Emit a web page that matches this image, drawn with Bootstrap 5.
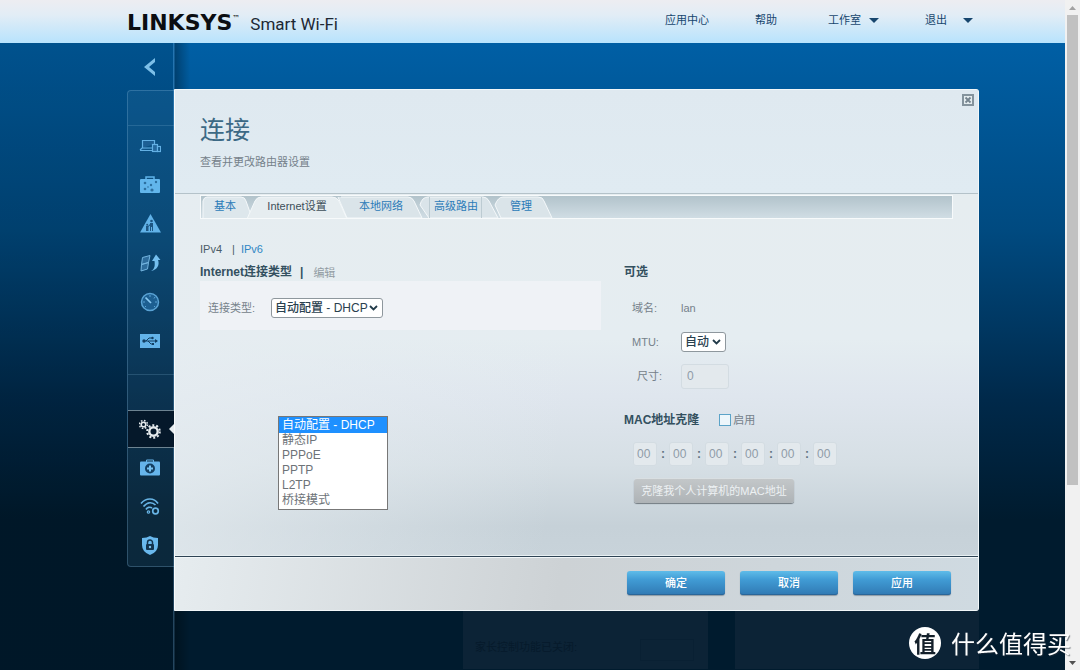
<!DOCTYPE html>
<html lang="zh-CN">
<head>
<meta charset="utf-8">
<meta name="viewport" content="width=device-width, initial-scale=1">
<title>Linksys Smart Wi-Fi</title>
<link href="https://cdn.jsdelivr.net/npm/bootstrap@5.3.0/dist/css/bootstrap.min.css" rel="stylesheet">
<style>
  body {
    font-family: "Liberation Sans", "Noto Sans CJK SC", sans-serif;
    font-size: 11px;
    line-height: 16px;
    color: #75818a;
    background: #001b2e;
  }
  a { text-decoration: none; }
  .page { background: linear-gradient(#005fa5 0, #005fa5 43px, #004a80 230px, #00294a 400px, #001b2e 520px); }

  /* top bar */
  .topbar { height: 43px; padding: 0 92px 0 127px; background: linear-gradient(#ededf1, #e2edf6 35%, #b8e3fd); }
  .brand-word { font: bold 22px/46px "DejaVu Sans", sans-serif; color: #0b0e12; }
  .brand-word sup { font-size: 8px; font-weight: normal; top: -9px; }
  .brand-sub { margin-left: 10px; font: 17px/48px Roboto, sans-serif; color: #1d2833; }
  .topnav { padding-top: 12px; gap: 46px; }
  .topnav a { color: #17466e; }
  .topnav .gap-more { margin-left: 5px; }
  .caret { width: 10px; height: 5px; margin-top: 6px; background: #17466e; clip-path: polygon(0 0, 100% 0, 50% 100%); }

  /* side rail */
  .stage { padding: 0 86px 0 127px; background: linear-gradient(90deg, rgba(0,0,0,.14) 173px, rgba(120,170,210,.3) 173px, rgba(120,170,210,.3) 174px, rgba(0,0,0,.3) 175px, transparent 190px); }
  .rail { width: 47px; }
  .back-btn { height: 47px; width: 46px; }
  .rail-box { border: 1px solid rgba(130,180,215,.3); border-right: 0; border-radius: 4px 0 0 4px; background: rgba(70,130,165,.16); height: 477px; }
  .rail-gap { height: 34px; }
  .rail-line { border-top: 1px solid rgba(130,180,215,.22); }
  .rail-tail { height: 36px; margin-top: 14px; }
  .rail-link { height: 39px; padding-right: 2px; }
  .rail-active { height: 38px; padding-right: 2px; background: #05182a; border-top: 1px solid #6d8391; border-bottom: 1px solid #6d8391; position: relative; }
  .rail-active::after { content: ""; position: absolute; right: 0; width: 5px; height: 10px; background: #e7edf0; clip-path: polygon(100% 0, 100% 100%, 0 50%); }

  /* dialog */
  .dialog-wrap { padding-top: 46px; }
  .dialog-box { border: 1px solid #f2f7f9; border-left-color: #f8fafb; border-radius: 0 3px 3px 0; background: #dfeaf1; }
  .dialog-head { height: 104px; padding: 24px 25px 0; background: linear-gradient(#dfe9f0, #e0ebf2); border-bottom: 1px solid #b4c2c9; }
  .dialog-head h1 { font-size: 25px; line-height: 32px; font-weight: 400; color: #3c6985; }
  .close-btn { top: 4px; right: 4px; width: 12px; height: 12px; }
  .dialog-body { height: 362px; padding: 1px 25px 0; position: relative;
    background: linear-gradient(100deg, rgba(230,237,241,.8), rgba(230,237,241,0) 50%), linear-gradient(#e6edf0, #e5edf1 40%, #dfe6ee 56%, #d6dfe5 75%, #c6d1d8 92%, #c8d3da); border-bottom: 1px solid #e8f0f3; }
  .dialog-foot { gap: 15px; padding: 14px 27px 15px; border-top: 1px solid #2e4354; box-shadow: inset 0 1px #f1f6f8;
    background: linear-gradient(100deg, #e6ecef, #cdd2d5 48%, #cfdae1); }

  /* tabs */
  .tabbar { height: 24px; border: 1px solid #f7fafb; background: linear-gradient(#b2c3cb, #d0dde4); position: relative; }
  .tab-shapes { left: 1px; top: 0; }
  .tab-links { position: relative; line-height: 20px; padding-left: 1px; }
  .tab-links a { color: #2a7bb8; text-align: center; }
  .tab-links .current { color: #3d4d58; }
  .t1 { width: 46px; } .t2 { width: 98px; } .t3 { width: 70px; } .t4 { width: 80px; } .t5 { width: 50px; }

  .ip-row { margin-top: 21px; line-height: 18px; }
  .ip-row span { color: #4a5c68; }
  .ip-row .bar { margin: 0 6px 0 10px; }
  .ip-row a { color: #2f86c4; }
  .cols { gap: 23px; margin-top: 7px; }
  .col-main { flex: 401 1 0; }
  .col-side { flex: 329 1 0; }
  .cap-title { font-size: 12px; font-weight: bold; line-height: 15px; color: #33505f; }
  .edit-link { color: #929ca3; padding-left: 2px; }
  .type-box { height: 49px; padding: 8px 8px 0; background: #eff2f6; }
  .type-box, .frow { line-height: 20px; }
  .lbl-type { width: 63px; }
  .type-box { padding-top: 4px; }
  .pick {
    appearance: none; height: 20px; padding: 0 12px 0 3px; border: 1px solid #8e979d; border-radius: 3px;
    font: 500 12px/18px "Liberation Sans", "Noto Sans CJK SC", sans-serif; color: #29404e;
    background: #fff url("data:image/svg+xml,%3Csvg xmlns='http://www.w3.org/2000/svg' width='9' height='6'%3E%3Cpath d='M1 1l3.500 3.500L8 1' fill='none' stroke='%23223b49' stroke-width='1.800'/%3E%3C/svg%3E") no-repeat right 4px center;
  }
  .pick-type { width: 112px; }
  .pick-mtu { width: 45px; }
  .frow { height: 34px; }
  .frow label, .frow .lbl { width: 57px; padding-left: 8px; }
  .frow .lbl-sub { padding-left: 13px; }
  .rows { padding-top: 11px; }
  .dim { border: 1px solid #d3dce2; border-radius: 3px; background: #e3e9ed; color: #8f9ca8; font-size: 12px; height: 25px; padding: 0 5px; }
  .dim-size { width: 48px; }
  .dim-mac { width: 24px; height: 24px; padding: 0 3px; }
  .mac-sep { width: 12px; text-align: center; font-size: 12px; font-weight: bold; color: #60727f; }
  .mac-head { margin-top: 19px; }
  .mac-head .tick { appearance: none; width: 12px; height: 12px; border: 1px solid #5ba3c8; background: #edf6fb; margin: 0 2px 0 20px; }
  .mac-row { margin: 14px 0 13px 9px; }
  .clone-btn { height: 24px; width: 160px; margin-left: 10px; border: 0; border-radius: 3px; font-size: 11px; color: #edf1f3;
    background: linear-gradient(#c3c7c9, #aeb3b6); box-shadow: 0 1px 1px #727b80, 0 -1px #d9dfe2; }
  .act-btn { width: 98px; height: 24px; border: 0; border-radius: 3px; padding: 0; color: #fff; font-size: 11px; font-weight: 500; line-height: 22px;
    background: linear-gradient(#5fbce9, #419cd5 35%, #3079b3); box-shadow: inset 0 -1px #2a6699, 0 1px 1px #8d9ba5; }
  .act-btn:hover { color: #fff; }

  /* open list */
  .open-list { left: 103px; top: 222px; width: 110px; border: 1px solid #777; background: #fff; font-size: 12px; line-height: 15px; color: #6d7378; padding-bottom: 1px; }
  .open-list li { padding: 0 3px; }
  .open-list .on { background: #1e90ff; color: #fff; line-height: 16px; }

  /* widgets behind the dialog */
  .behind { padding-left: 289px; gap: 27px; height: 58px; }
  .behind > div { flex: 1 1 0; background: #0c2336; color: #061a2b; padding: 28px 14px 0 12px; }
  .toggle-ghost { width: 54px; height: 22px; border: 1px solid #092033; }

  /* scroll strip and stamp */
  .strip { width: 15px; background: #f1f1f1; }
  .strip .up, .strip .down { height: 15px; }
  .strip .thumb { flex: 470; margin: 0 2px; background: #c1c1c1; }
  .strip .rest { flex: 170; }
  .stamp { position: fixed; right: 9px; bottom: 11px; font: 24px/32px "Noto Sans CJK SC", sans-serif; color: #fff; gap: 10px; text-shadow: 1px 1px 1px rgba(40,50,60,.6); }
  .stamp b { width: 32px; height: 32px; border-radius: 50%; background: #fff; color: #14202b; text-align: center; text-shadow: none; font-size: 22px; line-height: 31px; }
</style>
</head>
<body>
<div class="d-flex min-vh-100">
  <div class="page flex-grow-1 d-flex flex-column">
    <header class="topbar d-flex justify-content-between">
      <div class="d-flex text-nowrap">
        <span class="brand-word">LINKSYS<sup>™</sup></span>
        <span class="brand-sub">Smart Wi-Fi</span>
      </div>
      <nav class="topnav d-flex">
        <a href="#">应用中心</a>
        <a href="#">帮助</a>
        <a href="#" class="gap-more d-flex">工作室<span class="caret ms-2"></span></a>
        <a href="#" class="d-flex">退出<span class="caret ms-3"></span></a>
      </nav>
    </header>

    <div class="stage flex-grow-1 d-flex">
      <aside class="rail flex-shrink-0">
        <button class="back-btn btn p-0 rounded-0 d-flex align-items-center justify-content-center border-0" aria-label="返回">
          <svg width="12" height="20" viewBox="0 0 12 20"><path d="M11 1v4L5 10l6 5v4L0 10z" fill="#7cbfe8"/></svg>
        </button>
        <nav class="rail-box">
          <div class="rail-gap"></div>
          <div class="rail-line"></div>
          <a href="#" class="rail-link d-flex align-items-center justify-content-center" aria-label="设备列表">
            <svg width="22" height="16" viewBox="0 0 22 16" fill="none" stroke="#63b0e4" stroke-width="1.200"><path d="M3.500 10V2.500h12V6M1 12.500h12M1 12l2-2h10" fill="#1d5f94"/><rect x="13.500" y="6.500" width="5" height="7" fill="#24689d"/><rect x="18.500" y="8.500" width="3" height="5"/></svg></a>
          <a href="#" class="rail-link d-flex align-items-center justify-content-center" aria-label="访客网络">
            <svg width="20" height="18" viewBox="0 0 20 18"><path d="M6 3V1h8v2" fill="none" stroke="#5fb4ea" stroke-width="1.500"/><rect y="3" width="20" height="14" rx="1" fill="#62b6ec"/><g fill="#2d70a0"><circle cx="5" cy="7" r="1.300"/><circle cx="11" cy="9" r="1.200"/><circle cx="16" cy="6" r="1.200"/><circle cx="5" cy="13" r="1.300"/><circle cx="12" cy="14" r="1.600"/><circle cx="8" cy="11" r=".8"/></g></svg></a>
          <a href="#" class="rail-link d-flex align-items-center justify-content-center" aria-label="家长控制">
            <svg width="21" height="19" viewBox="0 0 21 19"><path d="M10.500 0L21 18.500H0z" fill="#61b2e8"/><g fill="#1d5683"><circle cx="11.500" cy="7" r="1.300"/><path d="M10 9h3v8h-1v-4h-1v4h-1zM6 12h2.500v5H6z"/><circle cx="7.200" cy="10.800" r="1"/><path d="M8 12l2-2v1.500L8 13z"/></g></svg></a>
          <a href="#" class="rail-link d-flex align-items-center justify-content-center" aria-label="媒体优先级">
            <svg width="21" height="18" viewBox="0 0 21 18"><path d="M2.500 3.500l7.500-2-1.500 7-7 2zM1.500 10.500l7-2-1 6.500-6.500 2z" fill="#2d6c9c" stroke="#73b4df"/><path d="M11 17c4-2 4-6 3.500-10H12l4-6.500L20.500 6H18c2 5-1 10-7 11z" fill="#74bfef"/></svg></a>
          <a href="#" class="rail-link d-flex align-items-center justify-content-center" aria-label="速度测试">
            <svg width="20" height="20" viewBox="0 0 20 20" fill="none"><circle cx="10" cy="10" r="8.500" stroke="#5aa3d5" stroke-width="1.500" fill="#1d5f91"/><path d="M10 3v2M15 5l-1 1.500M17 10h-2M3 10h2M5 15l1-1M15 15l-1-1" stroke="#5aa3d5"/><path d="M5.500 5.500L11 11" stroke="#8ac9f2" stroke-width="1.700"/></svg></a>
          <a href="#" class="rail-link d-flex align-items-center justify-content-center" aria-label="USB 存储">
            <svg width="20" height="14" viewBox="0 0 20 14"><path d="M0 0h20v14H0z" fill="#63b3e9"/><path d="M3 7h14M6 7l3-3h3M8 7l3 3h2" stroke="#123f63" fill="none"/><path d="M15 5l3 2-3 2z" fill="#123f63"/><circle cx="4" cy="7" r="1.700" fill="#123f63"/><circle cx="12.500" cy="4" r="1.200" fill="#123f63"/><path d="M12 9h2v2h-2z" fill="#123f63"/></svg></a>
          <div class="rail-line rail-tail"></div>
          <a href="#" class="rail-active d-flex align-items-center justify-content-center" aria-label="连接">
            <svg width="22" height="20" viewBox="0 0 22 20" fill="none" stroke="#e5eaed"><circle cx="4.500" cy="5.500" r="2.300" stroke-width="1.600"/><circle cx="4.500" cy="5.500" r="4" stroke-width="1.500" stroke-dasharray="1.600 1.540"/><circle cx="14.500" cy="12.500" r="4.200" stroke-width="2.400"/><circle cx="14.500" cy="12.500" r="6.300" stroke-width="2" stroke-dasharray="2 1.960"/></svg></a>
          <a href="#" class="rail-link d-flex align-items-center justify-content-center" aria-label="故障排除">
            <svg width="20" height="17" viewBox="0 0 20 17"><path d="M6.500 3V1h7v2" fill="none" stroke="#68b5e8"/><rect y="2.500" width="20" height="14" rx="1" fill="#66b4ea"/><circle cx="10" cy="9.500" r="5" fill="#143f62"/><path d="M10 6.500v6M7 9.500h6" stroke="#78c3f2" stroke-width="2"/></svg></a>
          <a href="#" class="rail-link d-flex align-items-center justify-content-center" aria-label="无线">
            <svg width="20" height="17" viewBox="0 0 20 17" fill="none" stroke="#68b4e5" stroke-width="1.700"><path d="M1 5.500c5-6 13-6 17 0M3.500 8.500c4-5 9-4.500 12-1.500M6 11.500c1-2 4-3 6-1.500"/><circle cx="15.500" cy="13" r="2.800"/><circle cx="8.500" cy="14" r="1.200" stroke-width="1.200"/></svg></a>
          <a href="#" class="rail-link d-flex align-items-center justify-content-center" aria-label="安全">
            <svg width="16" height="19" viewBox="0 0 16 19"><path d="M0 2q5 0 8-2 3 2 8 2v7q0 7-8 10-8-3-8-10z" fill="#69b8ed"/><rect x="4" y="8" width="8" height="6" rx="1" fill="#12334e"/><path d="M5.500 8V6.500a2.500 2.500 0 015 0V8" fill="none" stroke="#12334e" stroke-width="1.500"/><circle cx="8" cy="11" r="1.200" fill="#7bc0ea"/></svg></a>
        </nav>
      </aside>

      <main class="dialog-wrap flex-grow-1">
        <section class="dialog-box position-relative">
          <button class="close-btn position-absolute btn p-0 border-0 d-flex" aria-label="关闭">
            <svg width="12" height="12" viewBox="0 0 12 12"><rect x="1" y="1" width="10" height="10" fill="#e4ecef" stroke="#84939d" stroke-width="2"/><path d="M3.500 3.500l5 5M8.500 3.500l-5 5" stroke="#74838e" stroke-width="1.800"/></svg>
          </button>
          <div class="dialog-head">
            <h1 class="m-0">连接</h1>
            <p class="m-0 mt-2">查看并更改路由器设置</p>
          </div>

          <div class="dialog-body">
            <nav class="tabbar">
              <svg class="tab-shapes position-absolute" width="352" height="22" viewBox="0 0 352 22" stroke="#f4f8fa">
                <path d="M1 22V5q1-4 4-4h34q4 0 5 4l6 17" fill="#dde7ec"/>
                <path d="M139 1h67q4 0 6 4l8 17h-75l-9-21" fill="#dae4e9"/>
                <path d="M227 22L218 9q2-8 8-8h55q4 0 6 4l9 17z" fill="#dae4e9"/>
                <path d="M299 22L293 9q3-8 8-8h35q5 0 6 4l8 17z" fill="#dae4e9"/>
                <path d="M227.500 1v21M279.500 1v21" stroke="#bccbd2"/>
                <path d="M45 23L53 5q2-4 6-4h71q5 0 7 4l8 18z" fill="#e6edf0"/>
              </svg>
              <div class="tab-links d-flex">
                <a href="#" class="t1">基本</a><a href="#" class="t2 current">Internet设置</a><a href="#" class="t3">本地网络</a><a href="#" class="t4">高级路由</a><a href="#" class="t5">管理</a>
              </div>
            </nav>

            <div class="ip-row d-flex">
              <span>IPv4</span><span class="bar">|</span><a href="#">IPv6</a>
            </div>

            <div class="cols d-flex">
              <div class="col-main">
                <div class="d-flex">
                  <h2 class="cap-title m-0">Internet连接类型</h2><span class="cap-title mx-2">|</span><a href="#" class="edit-link">编辑</a>
                </div>
                <div class="type-box d-flex align-items-center">
                  <label class="lbl-type" for="ctype">连接类型:</label>
                  <select id="ctype" class="pick pick-type">
                    <option>自动配置 - DHCP</option><option>静态IP</option><option>PPPoE</option><option>PPTP</option><option>L2TP</option><option>桥接模式</option>
                  </select>
                </div>
              </div>

              <div class="col-side">
                <h2 class="cap-title m-0">可选</h2>
                <div class="rows">
                  <div class="frow d-flex align-items-center"><span class="lbl">域名:</span><span>lan</span></div>
                  <div class="frow d-flex align-items-center"><label for="mtu">MTU:</label><select id="mtu" class="pick pick-mtu"><option>自动</option><option>手动</option></select></div>
                  <div class="frow d-flex align-items-center"><label for="msize" class="lbl-sub">尺寸:</label><input id="msize" class="dim dim-size" value="0" disabled></div>
                </div>
                <div class="mac-head d-flex align-items-center">
                  <h2 class="cap-title m-0">MAC地址克隆</h2>
                  <input type="checkbox" class="tick" id="mac-on"><label for="mac-on">启用</label>
                </div>
                <div class="mac-row d-flex align-items-center">
                  <input class="dim dim-mac" value="00" aria-label="MAC 1" disabled><span class="mac-sep">:</span>
                  <input class="dim dim-mac" value="00" aria-label="MAC 2" disabled><span class="mac-sep">:</span>
                  <input class="dim dim-mac" value="00" aria-label="MAC 3" disabled><span class="mac-sep">:</span>
                  <input class="dim dim-mac" value="00" aria-label="MAC 4" disabled><span class="mac-sep">:</span>
                  <input class="dim dim-mac" value="00" aria-label="MAC 5" disabled><span class="mac-sep">:</span>
                  <input class="dim dim-mac" value="00" aria-label="MAC 6" disabled>
                </div>
                <button class="clone-btn p-0 d-block text-nowrap" disabled>克隆我个人计算机的MAC地址</button>
              </div>
            </div>

            <ul class="open-list position-absolute list-unstyled m-0" role="listbox" aria-label="连接类型">
              <li class="on" role="option" aria-selected="true">自动配置 - DHCP</li>
              <li role="option">静态IP</li>
              <li role="option">PPPoE</li>
              <li role="option">PPTP</li>
              <li role="option">L2TP</li>
              <li role="option">桥接模式</li>
            </ul>
          </div>

          <div class="dialog-foot d-flex justify-content-end">
            <button class="act-btn btn">确定</button>
            <button class="act-btn btn">取消</button>
            <button class="act-btn btn">应用</button>
          </div>
        </section>

        <div class="behind d-flex">
          <div class="d-flex justify-content-between"><span>家长控制功能已关闭:</span><span class="toggle-ghost flex-shrink-0"></span></div>
          <div></div>
        </div>
      </main>
    </div>
  </div>

  <div class="strip flex-shrink-0 d-flex flex-column" aria-hidden="true">
    <div class="up d-flex align-items-center justify-content-center"><svg width="7" height="4"><path d="M0 4h7L3.500 0z" fill="#a3a3a3"/></svg></div>
    <div class="thumb"></div>
    <div class="rest"></div>
    <div class="down d-flex align-items-center justify-content-center"><svg width="7" height="4"><path d="M0 0h7L3.500 4z" fill="#505050"/></svg></div>
  </div>
</div>
<div class="stamp d-flex"><b>值</b><span>什么值得买</span></div>
<script src="https://cdn.jsdelivr.net/npm/bootstrap@5.3.0/dist/js/bootstrap.bundle.min.js"></script>
</body>
</html>
